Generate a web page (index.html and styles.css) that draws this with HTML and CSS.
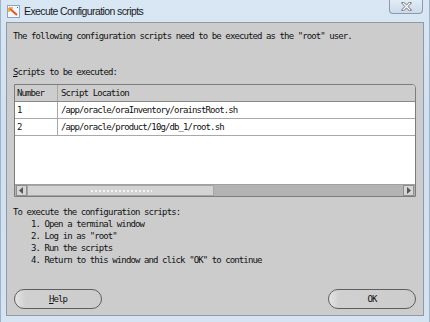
FILE: index.html
```html
<!DOCTYPE html>
<html lang="en">
<head>
  <meta charset="UTF-8">
  <title>Execute Configuration scripts</title>
  <link rel="stylesheet" href="styles.css">
</head>
<body>
  <div class="window">
    <div class="titlebar">
      <svg class="app-icon" width="13" height="13" viewBox="0 0 13 13">
        <rect x="0.5" y="0.5" width="12" height="12" fill="#f4f8fc" stroke="#8aa4c4"/>
        <path d="M2 3 L10 10" stroke="#e8541c" stroke-width="2"/>
        <path d="M2 3 L6 3 M2 3 L2 7" stroke="#f0a020" stroke-width="1.5"/>
        <path d="M10 2.5 L11 2.5" stroke="#3060b0" stroke-width="1"/>
      </svg>
      <span class="title">Execute Configuration scripts</span>
    </div>
    <div class="close-btn">
      <svg width="11" height="9" viewBox="0 0 11 9">
        <path d="M2 1 L9 8 M9 1 L2 8" stroke="#7d8590" stroke-width="3" stroke-linecap="square"/>
        <path d="M2 1 L9 8 M9 1 L2 8" stroke="#ffffff" stroke-width="1.2"/>
      </svg>
    </div>

    <div class="client">
      <p class="intro">The following configuration scripts need to be executed as the "root" user.</p>
      <p class="label"><u>S</u>cripts to be executed:</p>

      <div class="script-table">
        <div class="row head">
          <div class="cell num">Number</div>
          <div class="cell loc">Script Location</div>
        </div>
        <div class="row">
          <div class="cell num">1</div>
          <div class="cell loc">/app/oracle/oraInventory/orainstRoot.sh</div>
        </div>
        <div class="row">
          <div class="cell num">2</div>
          <div class="cell loc">/app/oracle/product/10g/db_1/root.sh</div>
        </div>
        <div class="filler"></div>
        <div class="hscroll">
          <div class="arrow left">
            <svg width="5" height="7" viewBox="0 0 5 7"><path d="M4 0 L0 3.5 L4 7 Z" fill="#555"/></svg>
          </div>
          <div class="thumb"><span class="grip"></span></div>
          <div class="track"></div>
          <div class="arrow right">
            <svg width="5" height="7" viewBox="0 0 5 7"><path d="M1 0 L5 3.5 L1 7 Z" fill="#555"/></svg>
          </div>
        </div>
      </div>

      <div class="steps">
        <p>To execute the configuration scripts:</p>
        <p class="step">1. Open a terminal window</p>
        <p class="step">2. Log in as "root"</p>
        <p class="step">3. Run the scripts</p>
        <p class="step">4. Return to this window and click "OK" to continue</p>
      </div>

      <div class="buttons">
        <button class="btn"><u>H</u>elp</button>
        <button class="btn">OK</button>
      </div>
    </div>
  </div>
</body>
</html>
```

FILE: styles.css
```css
* {
  margin: 0;
  padding: 0;
  box-sizing: border-box;
}

body {
  width: 430px;
  height: 322px;
  overflow: hidden;
  background: #dfe9f3;
}

.window {
  position: relative;
  width: 430px;
  height: 322px;
  background: linear-gradient(180deg, #d9e7f4 0%, #cfe0f0 40%, #d6e3f0 100%);
  border-left: 1px solid #9db3c9;
  border-right: 1px solid #9db3c9;
}

.titlebar {
  height: 22px;
  display: flex;
  align-items: center;
  padding-left: 6px;
  gap: 4px;
}

.app-icon {
  flex: none;
}

.title {
  font-family: "Liberation Sans", sans-serif;
  font-size: 10.5px;
  color: #1c1c1c;
  letter-spacing: -0.6px;
}

.close-btn {
  position: absolute;
  top: -1px;
  right: 6px;
  width: 34px;
  height: 15px;
  border: 1px solid #8c9aab;
  border-top: none;
  border-radius: 0 0 4px 4px;
  background: linear-gradient(180deg, #e4edf6, #cbdaea);
  display: flex;
  align-items: center;
  justify-content: center;
}

.client {
  height: 294px;
  margin: 0 5px;
  border: 1px solid #8d9aa7;
  background: #cccccc;
  display: flex;
  flex-direction: column;
  font-family: "DejaVu Sans Mono", monospace;
  font-size: 9px;
  letter-spacing: -0.9px;
  color: #111;
}

.client p {
  line-height: 12px;
  white-space: nowrap;
}

.intro {
  margin: 7px 0 0 6px;
}

.label {
  margin: 24px 0 0 6px;
}

.label u,
.btn u {
  text-decoration: underline;
  text-underline-offset: 1px;
}

.script-table {
  margin: 6px 0 0 7px;
  width: 402px;
  height: 113px;
  border: 1px solid #7c7c7c;
  border-top-right-radius: 4px;
  background: #ffffff;
  display: flex;
  flex-direction: column;
  overflow: hidden;
}

.row {
  display: flex;
  height: 17px;
  border-bottom: 1px solid #a8a8a8;
}

.row.head {
  background: #cdcdcd;
  border-bottom: 1px solid #8a8a8a;
}

.cell {
  line-height: 16px;
  padding-left: 2px;
  white-space: nowrap;
}

.cell.num {
  width: 43px;
  border-right: 1px solid #a8a8a8;
}

.cell.loc {
  flex: 1;
  padding-left: 3px;
}

.filler {
  flex: 1;
}

.hscroll {
  height: 12px;
  display: flex;
  background: #b3b3b3;
  border-top: 1px solid #a0a0a0;
}

.arrow {
  width: 11px;
  display: flex;
  align-items: center;
  justify-content: center;
  background: #d6d6d6;
  border: 1px solid #8e8e8e;
}

.arrow.left {
  margin-left: 1px;
}

.arrow.right {
  margin-right: 1px;
}

.thumb {
  width: 187px;
  background: #d3d3d3;
  border: 1px solid #a6a6a6;
  display: flex;
  align-items: center;
  justify-content: center;
}

.grip {
  width: 62px;
  height: 4px;
  background-image: radial-gradient(circle, #f4f4f4 0.8px, transparent 1px);
  background-size: 4px 4px;
}

.track {
  flex: 1;
}

.steps {
  margin: 9px 0 0 6px;
}

.step {
  padding-left: 18px;
}

.buttons {
  margin: 23px 7px 0 7px;
  display: flex;
  justify-content: space-between;
}

.btn {
  width: 88px;
  height: 20px;
  border: 1px solid #5e5e5e;
  border-radius: 10px;
  background: linear-gradient(90deg, #e4e4e4 0%, #d0d0d0 12%, #cccccc 100%);
  font-family: "DejaVu Sans Mono", monospace;
  font-size: 9px;
  letter-spacing: -0.9px;
  color: #111;
}
```
